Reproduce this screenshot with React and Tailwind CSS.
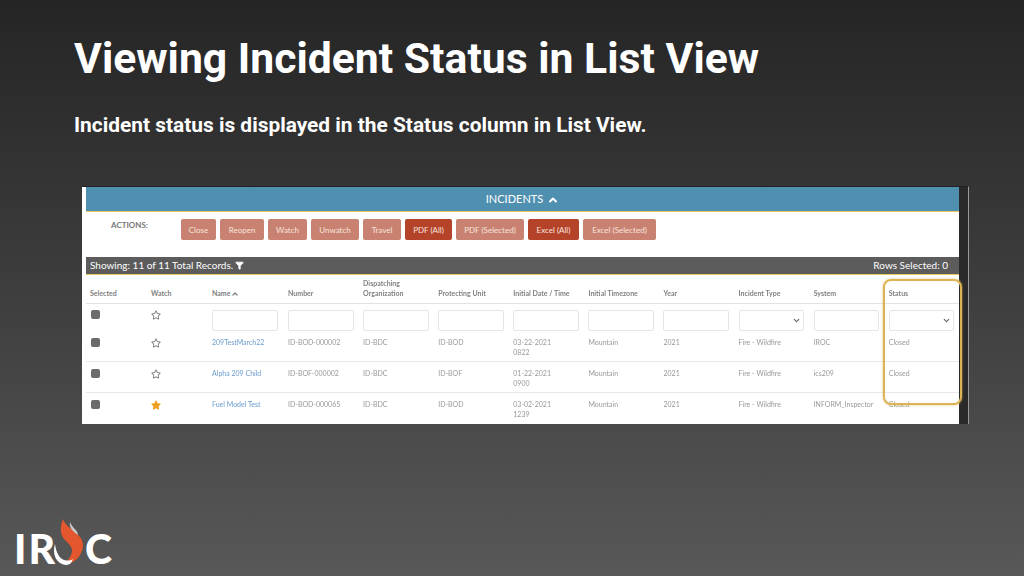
import { ChevronUp, ChevronDown, Filter } from 'lucide-react';
import { FaStar, FaRegStar } from 'react-icons/fa';

const buttons = [
  { label: 'Close', w: 'w-[35px]' },
  { label: 'Reopen', w: 'w-[44px]' },
  { label: 'Watch', w: 'w-[39px]' },
  { label: 'Unwatch', w: 'w-[48px]' },
  { label: 'Travel', w: 'w-[38px]' },
  { label: 'PDF (All)', w: 'w-[47px]', dark: true },
  { label: 'PDF (Selected)', w: 'w-[68px]' },
  { label: 'Excel (All)', w: 'w-[51px]', dark: true },
  { label: 'Excel (Selected)', w: 'w-[73px]' },
];

const headers = ['Selected', 'Watch', 'Name', 'Number', 'Dispatching Organization', 'Protecting Unit', 'Initial Date / Time', 'Initial Timezone', 'Year', 'Incident Type', 'System', 'Status'];

const rows = [
  { name: '209TestMarch22', number: 'ID-BOD-000002', unit: 'ID-BOD', date: '03-22-2021', time: '0822', system: 'IROC', h: 'h-[31px]' },
  { name: 'Alpha 209 Child', number: 'ID-BOF-000002', unit: 'ID-BOF', date: '01-22-2021', time: '0900', system: 'ics209', h: 'h-[31px]' },
  { name: 'Fuel Model Test', number: 'ID-BOD-000065', unit: 'ID-BOD', date: '03-02-2021', time: '1239', system: 'INFORM_Inspector', starred: true, h: 'h-[32px]' },
];

const gridCols = 'grid grid-cols-[61px_61px_76px_repeat(9,75.1px)] pl-[4px]';

const FilterBox = ({ select }) => (
  <div className="relative h-[21px] w-[65.5px] rounded-[2px] border border-[#e3e6e8] bg-white">
    {select && <ChevronDown className="absolute right-[2px] top-[5px] h-[9px] w-[9px] text-[#666]" strokeWidth={3} />}
  </div>
);

const Checkbox = () => <div className="ml-[1px] h-[9px] w-[9px] rounded-[2px] bg-[#6b6b6b]" />;

const Logo = () => (
  <div className="flex h-[50px] items-end font-['Lato',sans-serif] text-[41px] font-black leading-[36px] text-white">
    <span className="w-[36px] tracking-[2px]">IR</span>
    <svg viewBox="50 518 40 50" className="h-[50px] w-[40px] shrink-0">
      <path d="M63 520 C60 527 60 535 64 540 C68 544 73 548 72 553 C71 558 68 562 63 565 C72 567 82 558 83 547 C83 538 76 534 70 529 C66 526 64 523 63 520 Z" fill="#e4572e" />
      <path d="M70 523 C69 528 72 532 78 536 C78 531 72 529 70 523 Z" fill="#c9c9c9" />
      <path d="M55 545 C52 555 56 565 66 566 C70 566 72 563 73 560 C70 562 66 562 62 560 C58 557 56 552 55 545 Z" fill="#ffffff" />
    </svg>
    <span className="ml-[-5px]">C</span>
  </div>
);

export default function App() {
  return (
    <div className="flex h-[576px] w-[1024px] flex-col overflow-hidden bg-gradient-to-b from-[#252525] to-[#585858] font-['Roboto',sans-serif] text-white">
      <h1 className="ml-[74px] mt-[32px] text-[42.7px] font-bold leading-[52px]">Viewing Incident Status in List View</h1>
      <p className="ml-[74px] mt-[27px] text-[20.9px] font-bold leading-[28px]">Incident status is displayed in the Status column in List View.</p>

      <div className="relative ml-[82px] mt-[47px] h-[238px] w-[887px] shrink-0 overflow-hidden border-r border-t border-r-[#999] border-t-[#222] bg-[#2a2a2a] font-['Lato',sans-serif]">
        <div className="h-full w-[877px] bg-white pl-[4px] blur-[0.35px]">
          <div className="flex h-[25px] items-center justify-center gap-[4px] border-b border-[#e8c95c] bg-[#4f8fb0] pt-[1px] text-[11px] text-white">
            INCIDENTS <ChevronUp className="h-[12px] w-[12px]" strokeWidth={4} />
          </div>

          <div className="flex h-[45px]">
            <div className="mt-[7px] w-[95px] pl-[25px] text-[8px] font-bold text-[#777]">ACTIONS:</div>
            <div className="mt-[7px] flex h-[21px] gap-[4px]">
              {buttons.map((b) => (
                <div key={b.label} className={`flex items-center justify-center rounded-[2px] text-[8px] text-[#f7e4de] ${b.w} ${b.dark ? 'bg-[#b5432a]' : 'bg-[#c98271]'}`}>
                  {b.label}
                </div>
              ))}
            </div>
          </div>

          <div className="flex h-[18px] items-center justify-between border-b border-[#e8c95c] bg-[#5c5c5c] pl-[4px] pr-[11px] text-[10px] text-white">
            <div className="flex items-center gap-[2px]">Showing: 11 of 11 Total Records. <Filter className="h-[9px] w-[9px] fill-white" /></div>
            <div>Rows Selected: 0</div>
          </div>

          <div className={`${gridCols} h-[29px] items-end border-b border-[#e3e3e3] pb-[5px] text-[7px] font-bold leading-[10px] text-[#808080]`}>
            {headers.map((h) => (
              <div key={h} className={h.startsWith('Dispatching') ? 'w-[55px]' : ''}>
                {h}{h === 'Name' && <ChevronUp className="ml-[1px] inline h-[8px] w-[8px]" strokeWidth={4} />}
              </div>
            ))}
          </div>

          <div className={`${gridCols} h-[27px] items-start pt-[6px]`}>
            <div><Checkbox /></div>
            <FaRegStar className="h-[10px] w-[10px] text-[#777]" />
            {headers.slice(2).map((h) => <FilterBox key={h} select={h === 'Incident Type' || h === 'Status'} />)}
          </div>

          {rows.map((r, i) => (
            <div key={r.name} className={`${gridCols} ${r.h} ${i < 2 ? 'border-b border-[#e8e8e8]' : ''} pt-[6px] text-[7px] leading-[10px] text-[#999]`}>
              <div className="mt-[1px]"><Checkbox /></div>
              {r.starred ? <FaStar className="mt-[1px] h-[10px] w-[10px] text-[#f0a020]" /> : <FaRegStar className="mt-[1px] h-[10px] w-[10px] text-[#777]" />}
              <div className="text-[#6a9ccc]">{r.name}</div>
              <div>{r.number}</div>
              <div>ID-BDC</div>
              <div>{r.unit}</div>
              <div>{r.date}<br />{r.time}</div>
              <div>Mountain</div>
              <div>2021</div>
              <div>Fire - Wildfire</div>
              <div>{r.system}</div>
              <div>Closed</div>
            </div>
          ))}
        </div>

        <div className="absolute left-[801px] top-[92px] h-[126px] w-[79px] rounded-[8px] border-[2px] border-[#dcb456] shadow-[0_0_2px_#dcb456]" />
      </div>

      <div className="ml-[14px] mt-[93px]"><Logo /></div>
    </div>
  );
}
